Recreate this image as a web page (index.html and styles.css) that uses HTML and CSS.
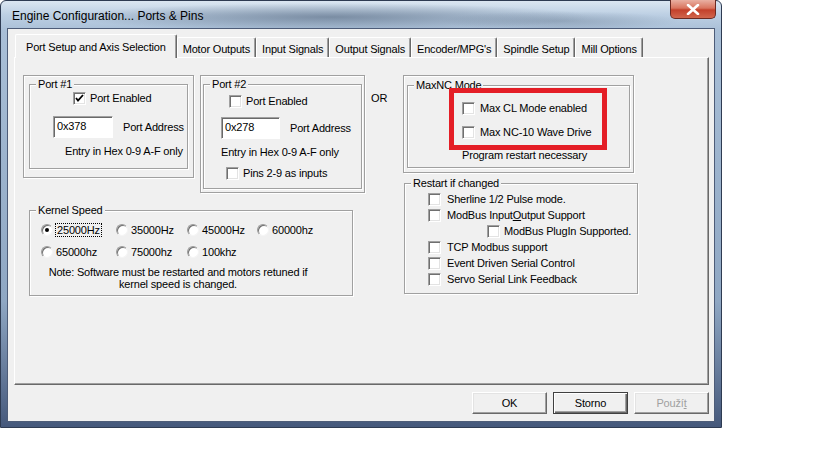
FILE: index.html
```html
<!DOCTYPE html>
<html lang="cs">
  <head>
    <meta charset="utf-8">
    <title>Engine Configuration... Ports &amp; Pins</title>
    <link rel="stylesheet" href="styles.css">
  </head>
  <body>

  <div class="window">
      <div class="titlebar">
          <span class="title">Engine Configuration... Ports &amp; Pins</span>
          <span class="close">
              <svg width="14" height="11" viewBox="0 0 14 11"><path d="M2 1 L12 10 M12 1 L2 10" stroke="#fff" stroke-width="2.6" stroke-linecap="round"/></svg>
          </span>
      </div>

      <div class="client">
          <div class="tabs">
              <div class="tab active">Port Setup and Axis Selection</div>
              <div class="tab">Motor Outputs</div>
              <div class="tab">Input Signals</div>
              <div class="tab">Output Signals</div>
              <div class="tab">Encoder/MPG's</div>
              <div class="tab">Spindle Setup</div>
              <div class="tab">Mill Options</div>
          </div>

          <div class="page">
              <div class="left">
                  <div class="ports">
                      <!-- Port #1 -->
                      <div class="frame port1">
                          <div class="group">
                              <div class="legend">Port #1</div>
                              <div class="row p1-enabled"><span class="cb checked"><svg width="11" height="11" viewBox="0 0 11 11"><path d="M2 5 L4 7.5 L9 2" fill="none" stroke="#000" stroke-width="1.8"/></svg></span><span>Port Enabled</span></div>
                              <div class="row p1-addr"><span class="textbox addr1">0x378</span><span>Port Address</span></div>
                              <div class="row p1-hint">Entry in Hex 0-9 A-F only</div>
                          </div>
                      </div>

                      <!-- Port #2 -->
                      <div class="frame port2">
                          <div class="group">
                              <div class="legend">Port #2</div>
                              <div class="row p2-enabled"><span class="cb"></span><span>Port Enabled</span></div>
                              <div class="row p2-addr"><span class="textbox addr2">0x278</span><span>Port Address</span></div>
                              <div class="row p2-hint">Entry in Hex 0-9 A-F only</div>
                              <div class="row p2-pins"><span class="cb"></span><span>Pins 2-9 as inputs</span></div>
                          </div>
                      </div>

                      <div class="or">OR</div>
                  </div>

                  <div class="group kernel">
                      <div class="legend">Kernel Speed</div>
                      <div class="radios">
                          <div class="radio"><span class="rb on"></span><span class="focus">25000Hz</span></div>
                          <div class="radio"><span class="rb"></span><span>35000Hz</span></div>
                          <div class="radio"><span class="rb"></span><span>45000Hz</span></div>
                          <div class="radio"><span class="rb"></span><span>60000hz</span></div>
                          <div class="radio"><span class="rb"></span><span>65000hz</span></div>
                          <div class="radio"><span class="rb"></span><span>75000hz</span></div>
                          <div class="radio"><span class="rb"></span><span>100khz</span></div>
                      </div>
                      <div class="note">Note: Software must be restarted and motors retuned if<br>kernel speed is changed.</div>
                  </div>
              </div>

              <div class="right">
                  <div class="frame maxnc">
                      <div class="group">
                          <div class="legend">MaxNC Mode</div>
                          <div class="row mx-cl"><span class="cb"></span><span>Max CL Mode enabled</span></div>
                          <div class="row mx-wave"><span class="cb"></span><span>Max NC-10 Wave Drive</span></div>
                          <div class="row mx-note">Program restart necessary</div>
                      </div>
                      <!-- red annotation drawn over the dialog -->
                      <div class="annot"></div>
                  </div>

                  <div class="group restart">
                      <div class="legend">Restart if changed</div>
                      <div class="checks">
                          <div class="row crow"><span class="cb"></span><span>Sherline 1/2 Pulse mode.</span></div>
                          <div class="row crow"><span class="cb"></span><span>ModBus Input<u>O</u>utput Support</span></div>
                          <div class="row crow sub"><span class="cb"></span><span>ModBus PlugIn Supported.</span></div>
                          <div class="row crow"><span class="cb"></span><span>TCP Modbus support</span></div>
                          <div class="row crow"><span class="cb"></span><span>Event Driven Serial Control</span></div>
                          <div class="row crow"><span class="cb"></span><span>Servo Serial Link Feedback</span></div>
                      </div>
                  </div>
              </div>
          </div>

          <div class="buttons">
              <div class="btn">OK</div>
              <div class="btn default">Storno</div>
              <div class="btn disabled">Použí<u>t</u></div>
          </div>
      </div>
  </div>

  </body>
</html>
```

FILE: styles.css
```css
/* page + base font */
body {
    margin: 0;
    background: #fff;
    font-family: "Liberation Sans", Arial, sans-serif;
    font-size: 11px;
    letter-spacing: -0.18px;
    color: #000;
}

/* window frame (Aero glass look) */
.window {
    width: 722px;
    height: 428px;
    box-sizing: border-box;
    border: 1px solid #2e3b52;
    border-radius: 6px 6px 0 0;
    padding: 0 6px 5px 6px;
    display: flex;
    flex-direction: column;
    background:
        radial-gradient(ellipse 260px 14px at 330px 16px, rgba(70, 88, 112, 0.55), transparent),
        radial-gradient(ellipse 120px 10px at 560px 20px, rgba(90, 108, 130, 0.35), transparent),
        linear-gradient(to bottom, #dbe6f1 0px, #bccfe3 14px, #a9bfd7 30px, #8fa7c3 300px, #44577a 428px);
}

.titlebar {
    height: 27px;
    display: flex;
    align-items: center;
    padding-left: 5px;
}
.title {
    font-size: 12px;
    letter-spacing: 0;
    margin-top: 2px;
}
.close {
    margin-left: auto;
    margin-right: -1px;
    align-self: flex-start;
    margin-top: -1px;
    width: 46px;
    height: 19px;
    box-sizing: border-box;
    border: 1px solid #6b2a22;
    border-top: none;
    border-radius: 0 0 5px 5px;
    background: linear-gradient(to bottom, #e9b0a2 0%, #d9755f 45%, #c3412b 55%, #d1664d 100%);
    display: flex;
    align-items: center;
    justify-content: center;
}

/* client area */
.client {
    flex: 1;
    background: #f0f0f0;
    border: 1px solid #4d5c78;
    padding: 5px 5px 0 6px;
}

/* tab strip (classic) */
.tabs {
    display: flex;
    align-items: flex-end;
    height: 23px;
    padding-left: 1px;
}
.tab {
    height: 20px;
    box-sizing: border-box;
    padding: 5px 5px 0 5px;
    border-left: 1px solid #fff;
    border-top: 1px solid #fff;
    border-right: 1px solid #696969;
    border-radius: 2px 2px 0 0;
    box-shadow: inset -1px 0 #a0a0a0;
    white-space: nowrap;
}
.tab.active {
    height: 24px;
    margin-bottom: -1px;
    padding: 6px 10px 0 10px;
    background: #f0f0f0;
    position: relative;
    z-index: 1;
}

/* tab page */
.page {
    width: 695px;
    height: 328px;
    box-sizing: border-box;
    border: 1px solid;
    border-color: #fff #696969 #696969 #fff;
    box-shadow: inset -1px -1px #a0a0a0;
    padding: 17px 0 0 8px;
    display: grid;
    grid-template-columns: 380px 236px;
    align-items: start;
}

.ports {
    display: flex;
    align-items: flex-start;
}

/* etched frame and group box */
.frame {
    box-sizing: border-box;
    border: 1px solid #a0a0a0;
    box-shadow: inset 1px 1px #fff, 1px 1px #fff;
    position: relative;
    flex-shrink: 0;
}
.group {
    box-sizing: border-box;
    border: 1px solid #a0a0a0;
    box-shadow: inset 1px 1px #fff, 1px 1px #fff;
}
.legend {
    margin: -7px 0 0 6px;
    padding: 0 2px;
    height: 13px;
    line-height: 13px;
    width: fit-content;
    background: #f0f0f0;
}

.row {
    display: flex;
    align-items: center;
    line-height: 13px;
    white-space: nowrap;
}

/* check box / radio / text box */
.cb {
    width: 13px;
    height: 13px;
    box-sizing: border-box;
    flex-shrink: 0;
    background: #fff;
    border: 1px solid;
    border-color: #a0a0a0 #fff #fff #a0a0a0;
    box-shadow: inset 1px 1px #6f6f6f, inset -1px -1px #e3e3e3;
    margin-right: 4px;
    display: flex;
    align-items: center;
    justify-content: center;
}
.rb {
    width: 12px;
    height: 12px;
    box-sizing: border-box;
    flex-shrink: 0;
    border-radius: 50%;
    background: #fff;
    border: 1px solid;
    border-color: #9a9a9a #f4f4f4 #f4f4f4 #9a9a9a;
    box-shadow: inset 1px 1px #6f6f6f;
    margin-right: 3px;
    display: flex;
    align-items: center;
    justify-content: center;
}
.rb.on::after {
    content: "";
    width: 4px;
    height: 4px;
    border-radius: 50%;
    background: #000;
}
.textbox {
    height: 22px;
    box-sizing: border-box;
    background: #fff;
    border: 1px solid;
    border-color: #a0a0a0 #fff #fff #a0a0a0;
    box-shadow: inset 1px 1px #696969;
    padding: 3px 0 0 3px;
    margin-right: 10px;
}

/* Port #1 */
.port1 {
    width: 171px;
    height: 103px;
    padding: 8px 5px 0 5px;
}
.port1 .group {
    height: 85px;
}
.p1-enabled { margin: 1px 0 0 43px; }
.p1-addr { margin: 11px 0 0 23px; }
.addr1 { width: 60px; }
.p1-hint { margin: 7px 0 0 35px; }

/* Port #2 */
.port2 {
    width: 165px;
    height: 118px;
    margin-left: 6px;
    padding: 8px 2px 0 2px;
}
.port2 .group {
    height: 105px;
}
.p2-enabled { margin: 4px 0 0 25px; }
.p2-addr { margin: 9px 0 0 17px; }
.addr2 { width: 59px; }
.p2-hint { margin: 7px 0 0 17px; }
.p2-pins { margin: 8px 0 0 22px; }

.or {
    margin: 17px 0 0 6px;
    line-height: 13px;
}

/* Kernel speed */
.kernel {
    width: 324px;
    height: 86px;
    margin: 17px 0 0 6px;
}
.radios {
    display: grid;
    grid-template-columns: 75px 71px 70px auto;
    grid-auto-rows: 22px;
    margin: 2px 0 0 11px;
}
.radio {
    display: flex;
    align-items: center;
}
.focus {
    outline: 1px dotted #000;
    padding: 0 1px;
}
.note {
    width: 296px;
    margin-top: 3px;
    text-align: center;
    line-height: 12px;
}

/* MaxNC */
.maxnc {
    width: 231px;
    height: 98px;
    padding: 9px 3px 0 3px;
}
.maxnc .group {
    height: 83px;
}
.mx-cl { margin: 10px 0 0 54px; }
.mx-wave { margin: 11px 0 0 54px; }
.mx-cl .cb, .mx-wave .cb { margin-right: 5px; }
.mx-note { margin: 10px 0 0 54px; }

.annot {
    position: absolute;
    left: 45px;
    top: 12px;
    width: 158px;
    height: 62px;
    box-sizing: border-box;
    border: 5px solid #e41e26;
}

/* Restart if changed */
.restart {
    width: 234px;
    height: 111px;
    margin: 10px 0 0 1px;
}
.checks {
    margin: 1px 0 0 23px;
}
.crow {
    height: 16px;
}
.crow .cb { margin-right: 6px; }
.crow.sub {
    margin-left: 59px;
}
.crow.sub .cb { margin-right: 4px; }

/* dialog buttons */
.buttons {
    display: flex;
    justify-content: flex-end;
    gap: 6px;
    margin-top: 7px;
}
.btn {
    width: 75px;
    height: 22px;
    box-sizing: border-box;
    border: 1px solid;
    border-color: #fff #696969 #696969 #fff;
    box-shadow: inset -1px -1px #a0a0a0, inset 1px 1px #e3e3e3;
    text-align: center;
    line-height: 20px;
}
.btn.default {
    border-color: #404040;
    box-shadow: inset 1px 1px #fff, inset -1px -1px #696969, inset -2px -2px #a0a0a0;
}
.btn.disabled {
    color: #a0a0a0;
}
```
